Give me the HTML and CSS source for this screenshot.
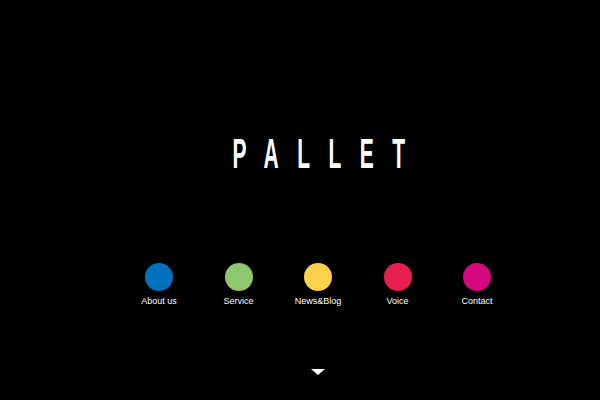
FILE: index.html
```html
<!DOCTYPE html>
<html lang="en">
<head>
<meta charset="utf-8">
<title>PALLET</title>
<link rel="stylesheet" href="styles.css">
</head>
<body>
<div class="page">
  <h1 class="logo"><span class="logo-text">PALLET</span></h1>
  <nav class="nav">
    <a class="nav-item" href="#"><span class="dot dot-blue"></span><span class="label">About us</span></a>
    <a class="nav-item" href="#"><span class="dot dot-green"></span><span class="label">Service</span></a>
    <a class="nav-item" href="#"><span class="dot dot-yellow"></span><span class="label">News&amp;Blog</span></a>
    <a class="nav-item" href="#"><span class="dot dot-red"></span><span class="label">Voice</span></a>
    <a class="nav-item" href="#"><span class="dot dot-pink"></span><span class="label">Contact</span></a>
  </nav>
  <span class="arrow"></span>
</div>
</body>
</html>
```

FILE: styles.css
```css
html, body {
  margin: 0;
  padding: 0;
  background: #000;
}
.page {
  height: 400px;
  box-sizing: border-box;
  padding-left: 36px;
  display: flex;
  flex-direction: column;
  align-items: center;
  font-family: "Liberation Sans", Arial, sans-serif;
  color: #fff;
}
.logo {
  margin: 133px 0 0 0;
  font-family: "Liberation Sans", Arial, sans-serif;
  font-weight: bold;
  font-size: 42px;
  line-height: 42px;
  height: 42px;
  width: 176px;
  display: flex;
  justify-content: center;
}
.logo-text {
  display: inline-block;
  letter-spacing: 37px;
  margin-left: 20px;
  transform: scaleX(0.5);
  white-space: nowrap;
}
.nav {
  display: flex;
  margin-top: 88px;
}
.nav-item {
  width: 79.5px;
  display: flex;
  flex-direction: column;
  align-items: center;
  text-decoration: none;
  color: #fff;
}
.dot {
  width: 28px;
  height: 28px;
  border-radius: 50%;
}
.dot-blue { background: #0071bc; }
.dot-green { background: #8dc86f; }
.dot-yellow { background: #fdd14b; }
.dot-red { background: #e71f4f; }
.dot-pink { background: #d5087f; }
.label {
  margin-top: 5px;
  font-size: 9px;
  line-height: 11px;
  white-space: nowrap;
}
.arrow {
  margin-top: 62px;
  width: 0;
  height: 0;
  border-left: 7px solid transparent;
  border-right: 7px solid transparent;
  border-top: 6px solid #fff;
}
```
